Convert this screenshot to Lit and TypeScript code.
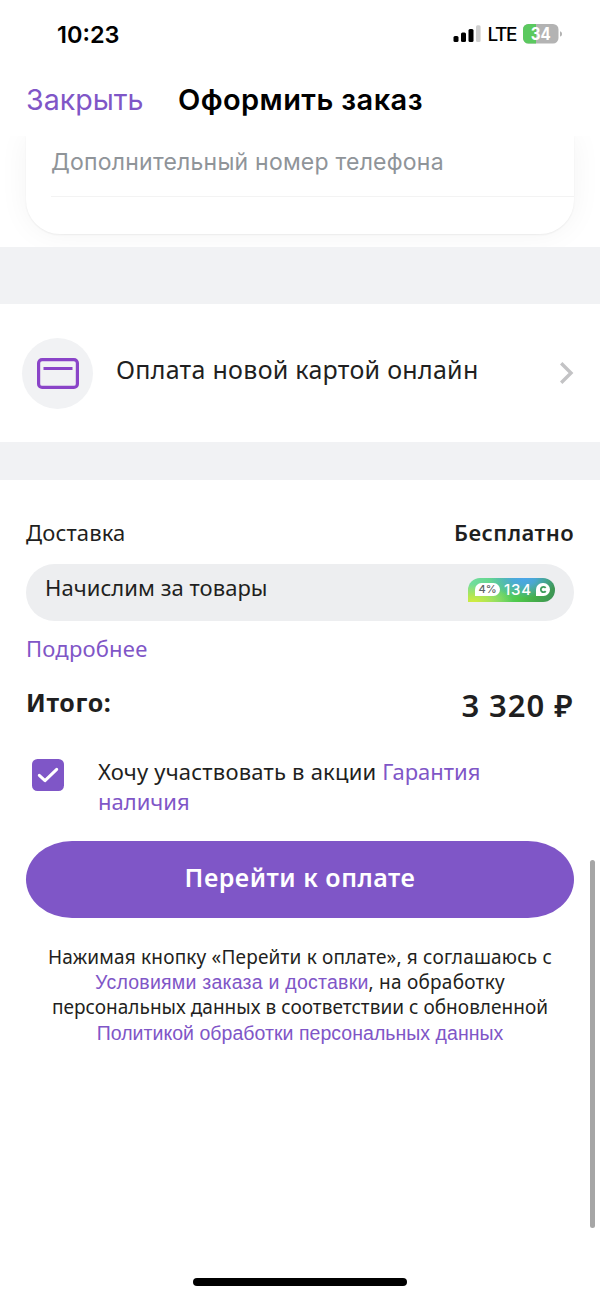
import { LitElement, html, css } from "lit";
import { customElement } from "lit/decorators.js";

@customElement("status-bar")
export class StatusBar extends LitElement {
  static styles = css`
    :host { display: flex; justify-content: space-between; align-items: center; height: 68px; flex: none; padding: 0 38px 0 57px; font-family: Inter, sans-serif; color: #000; box-sizing: border-box; }
    .time { font-size: 23.5px; font-weight: 600; }
    .indicators { display: flex; align-items: center; }
    .signal { display: block; }
    .lte { font-size: 19px; font-weight: 500; letter-spacing: -1.4px; margin: 1px 7px 0 6px; }
    .battery { display: block; }
    .level { font: 700 17.5px Inter, sans-serif; fill: #fff; }
  `;

  render() {
    return html`
      <span class="time">10:23</span>
      <div class="indicators">
        <svg class="signal" width="28" height="18" viewBox="0 0 28 18">
          <rect x="0.5" y="11" width="5" height="6" rx="1.5" />
          <rect x="8" y="7.5" width="5" height="9.5" rx="1.5" />
          <rect x="15.5" y="4" width="5" height="13" rx="1.5" />
          <rect x="23" y="0.2" width="4.6" height="16.8" rx="1.5" fill="#cfcfcf" />
        </svg>
        <span class="lte">LTE</span>
        <svg class="battery" width="39" height="20" viewBox="0 0 39 20">
          <defs>
            <clipPath id="cell"><rect width="35.5" height="19.6" rx="5.5" /></clipPath>
          </defs>
          <g clip-path="url(#cell)">
            <rect width="36" height="20" fill="#b3b3b3" />
            <rect width="13" height="20" fill="#5bc95f" />
          </g>
          <path d="M37 7.2c1.3.4 2 1.4 2 2.7s-.7 2.300-2 2.700z" fill="#b3b3b3" />
          <text class="level" x="17.800" y="16" text-anchor="middle" textLength="20" lengthAdjust="spacingAndGlyphs">34</text>
        </svg>
      </div>
    `;
  }
}

@customElement("bonus-badge")
export class BonusBadge extends LitElement {
  static styles = css`
    :host { display: flex; align-items: center; box-sizing: border-box; width: 87px; height: 24px; padding: 0 5px 0 7px; border-radius: 12px 12px 12px 0; font-family: Inter, sans-serif;
      background:
        radial-gradient(ellipse 34px 20px at 64% 0%, #4aa5ea 0%, rgba(74, 165, 234, 0.85) 35%, rgba(74, 165, 234, 0) 100%),
        radial-gradient(ellipse 40px 18px at 6% 100%, #d3ec3f 0%, rgba(190, 232, 70, 0.8) 40%, rgba(150, 220, 80, 0) 100%),
        linear-gradient(100deg, #74dfa0 0%, #62d48c 30%, #4fc94b 58%, #43a94a 80%, #3c9257 100%); }
    .percent { width: 25px; height: 13px; border-radius: 7px 7px 7px 0; background: #fff; color: #5c6366; font-size: 11px; line-height: 13.5px; font-weight: 500; text-align: center; }
    .points { flex: 1; text-align: center; color: #fff; font-size: 15px; line-height: 24px; font-weight: 500; letter-spacing: 0.9px; }
    .coin { width: 14px; height: 13px; border-radius: 7px 7px 7px 0; background: #fff; display: flex; align-items: center; justify-content: center; }
  `;

  render() {
    return html`
      <span class="percent">4%</span>
      <span class="points">134</span>
      <span class="coin">
        <svg width="13" height="13" viewBox="0 0 13 13">
          <path d="M8.700 4.900A2.700 2.700 0 1 0 8.700 8.100" fill="none" stroke="#3f9d5c" stroke-width="1.800" />
        </svg>
      </span>
    `;
  }
}

@customElement("app-root")
export class AppRoot extends LitElement {
  static styles = css`
    :host { display: block; }
    * { box-sizing: border-box; }
    .screen { position: relative; width: 600px; height: 1298px; background: #fff; overflow: hidden; display: flex; flex-direction: column; font-family: "Noto Sans", sans-serif; color: #1f1f21; white-space: nowrap; }
    .nav { height: 68px; display: flex; align-items: center; padding: 0 26px 4px; font-family: Inter, sans-serif; flex: none; line-height: 36px; }
    .close { width: 152px; font-size: 28.6px; color: #7f56c7; }
    .title { font-size: 29px; font-weight: 600; color: #000; letter-spacing: 0.42px; }
    .form { height: 111px; overflow: hidden; flex: none; padding: 0 26px; }
    .card { height: 98px; border-radius: 0 0 34px 34px; box-shadow: 0 0 30px rgba(0, 0, 0, 0.05), 0 1px 2px rgba(0, 0, 0, 0.06); background: #fff; padding-left: 25px; }
    .field { height: 61px; border-bottom: 1px solid #f3f3f3; font-family: Inter, sans-serif; font-size: 23px; letter-spacing: 0.22px; color: #8f9499; line-height: 52px; }
    .band { background: #f1f2f4; flex: none; height: 57px; }
    .band.slim { height: 38px; }
    .pay { height: 138px; flex: none; display: flex; align-items: center; padding: 0 26px 0 22px; }
    .round { width: 71px; height: 71px; border-radius: 50%; background: #f1f2f4; display: flex; align-items: center; justify-content: center; margin-right: 23px; }
    .method { font-size: 25px; letter-spacing: 0.28px; flex: 1; padding-bottom: 9px; }
    .summary { padding: 0 26px; flex: none; display: flex; flex-direction: column; }
    .row { display: flex; justify-content: space-between; align-items: center; }
    .delivery { height: 64px; margin-top: 20px; font-size: 22px; letter-spacing: 0.15px; }
    .free { font-weight: 600; letter-spacing: 0.45px; margin-right: -0.2px; }
    .bonus { height: 57px; margin-bottom: 1px; border-radius: 29px; background: #edeef0; padding: 0 19px; font-size: 22px; letter-spacing: 0.05px; }
    .earn { padding-bottom: 11px; }
    .badge { margin-bottom: 6px; }
    .more { font-size: 22px; letter-spacing: 0.2px; height: 54px; line-height: 52px; }
    .total { height: 60px; }
    .caption { font-size: 25px; font-weight: 700; letter-spacing: 0.6px; padding-bottom: 9px; }
    .sum { font-size: 31px; font-weight: 600; letter-spacing: 0.95px; margin-right: 0.5px; padding-bottom: 2px; }
    .agree { display: flex; height: 105px; padding: 21px 6px 0; }
    .check { flex: none; margin-top: 2px; }
    .promo { font-size: 22px; line-height: 30px; margin: -1px 0 0 34px; }
    .lead { letter-spacing: 0.21px; }
    .link { color: #7f56c7; }
    .buy { height: 77px; border: 0; border-radius: 46px / 38.5px; background: #7f56c7; color: #fff; font: 600 25px "Noto Sans", sans-serif; letter-spacing: 0.52px; padding: 0 0 5px; }
    .legal { display: flex; flex-direction: column; font-size: 19px; line-height: 25px; text-align: center; padding-top: 27px; }
    .l1 { letter-spacing: 0.18px; }
    .l2 { letter-spacing: 0.24px; }
    .l3 { letter-spacing: 0.03px; }
    .l4 { padding-top: 1px; letter-spacing: 0.04px; }
    .alt { font-family: "Liberation Sans", sans-serif; font-size: 19.5px; }
    .scrollbar { position: absolute; left: 590px; top: 860px; width: 5px; height: 368px; border-radius: 3px; background: #a6a6a6; }
    .home { position: absolute; left: 193px; top: 1278px; width: 214px; height: 8px; border-radius: 4px; background: #000; }
  `;

  render() {
    return html`
      <div class="screen">
        <status-bar></status-bar>
        <div class="nav"><span class="close">Закрыть</span><span class="title">Оформить заказ</span></div>
        <div class="form"><div class="card"><div class="field">Дополнительный номер телефона</div></div></div>
        <div class="band"></div>
        <div class="pay">
          <div class="round">
            <svg width="42" height="32" viewBox="0 0 42 32">
              <rect x="1.600" y="2.600" width="38.800" height="27.800" rx="3.500" fill="none" stroke="#8a44c8" stroke-width="3.200" />
              <path d="M6.500 11.500h29" stroke="#8a44c8" stroke-width="3" />
            </svg>
          </div>
          <div class="method">Оплата новой картой онлайн</div>
          <svg width="14" height="22" viewBox="0 0 14 22">
            <path d="M1.200 1.200L11 11L1.200 20.800" fill="none" stroke="#c3c3c5" stroke-width="3.400" />
          </svg>
        </div>
        <div class="band slim"></div>
        <div class="summary">
          <div class="row delivery"><span>Доставка</span><span class="free">Бесплатно</span></div>
          <div class="row bonus"><span class="earn">Начислим за товары</span><bonus-badge class="badge"></bonus-badge></div>
          <div class="more link">Подробнее</div>
          <div class="row total"><span class="caption">Итого:</span><span class="sum">3 320 ₽</span></div>
          <div class="agree">
            <svg class="check" width="32" height="32" viewBox="0 0 32 32">
              <rect width="32" height="32" rx="5.500" fill="#7f56c7" />
              <path d="M7.300 16.300L13 21.600L24.700 10.300" fill="none" stroke="#fff" stroke-width="3" stroke-linecap="round" stroke-linejoin="round" />
            </svg>
            <div class="promo"><span class="lead">Хочу участвовать в акции</span> <span class="link">Гарантия<br>наличия</span></div>
          </div>
          <button class="buy">Перейти к оплате</button>
          <div class="legal">
            <div class="l1">Нажимая кнопку «Перейти к оплате», я соглашаюсь с</div>
            <div class="l2"><span class="link alt">Условиями заказа и доставки</span>, на обработку</div>
            <div class="l3">персональных данных в соответствии с обновленной</div>
            <div class="l4"><span class="link alt">Политикой обработки персональных данных</span></div>
          </div>
        </div>
        <div class="scrollbar"></div>
        <div class="home"></div>
      </div>
    `;
  }
}
